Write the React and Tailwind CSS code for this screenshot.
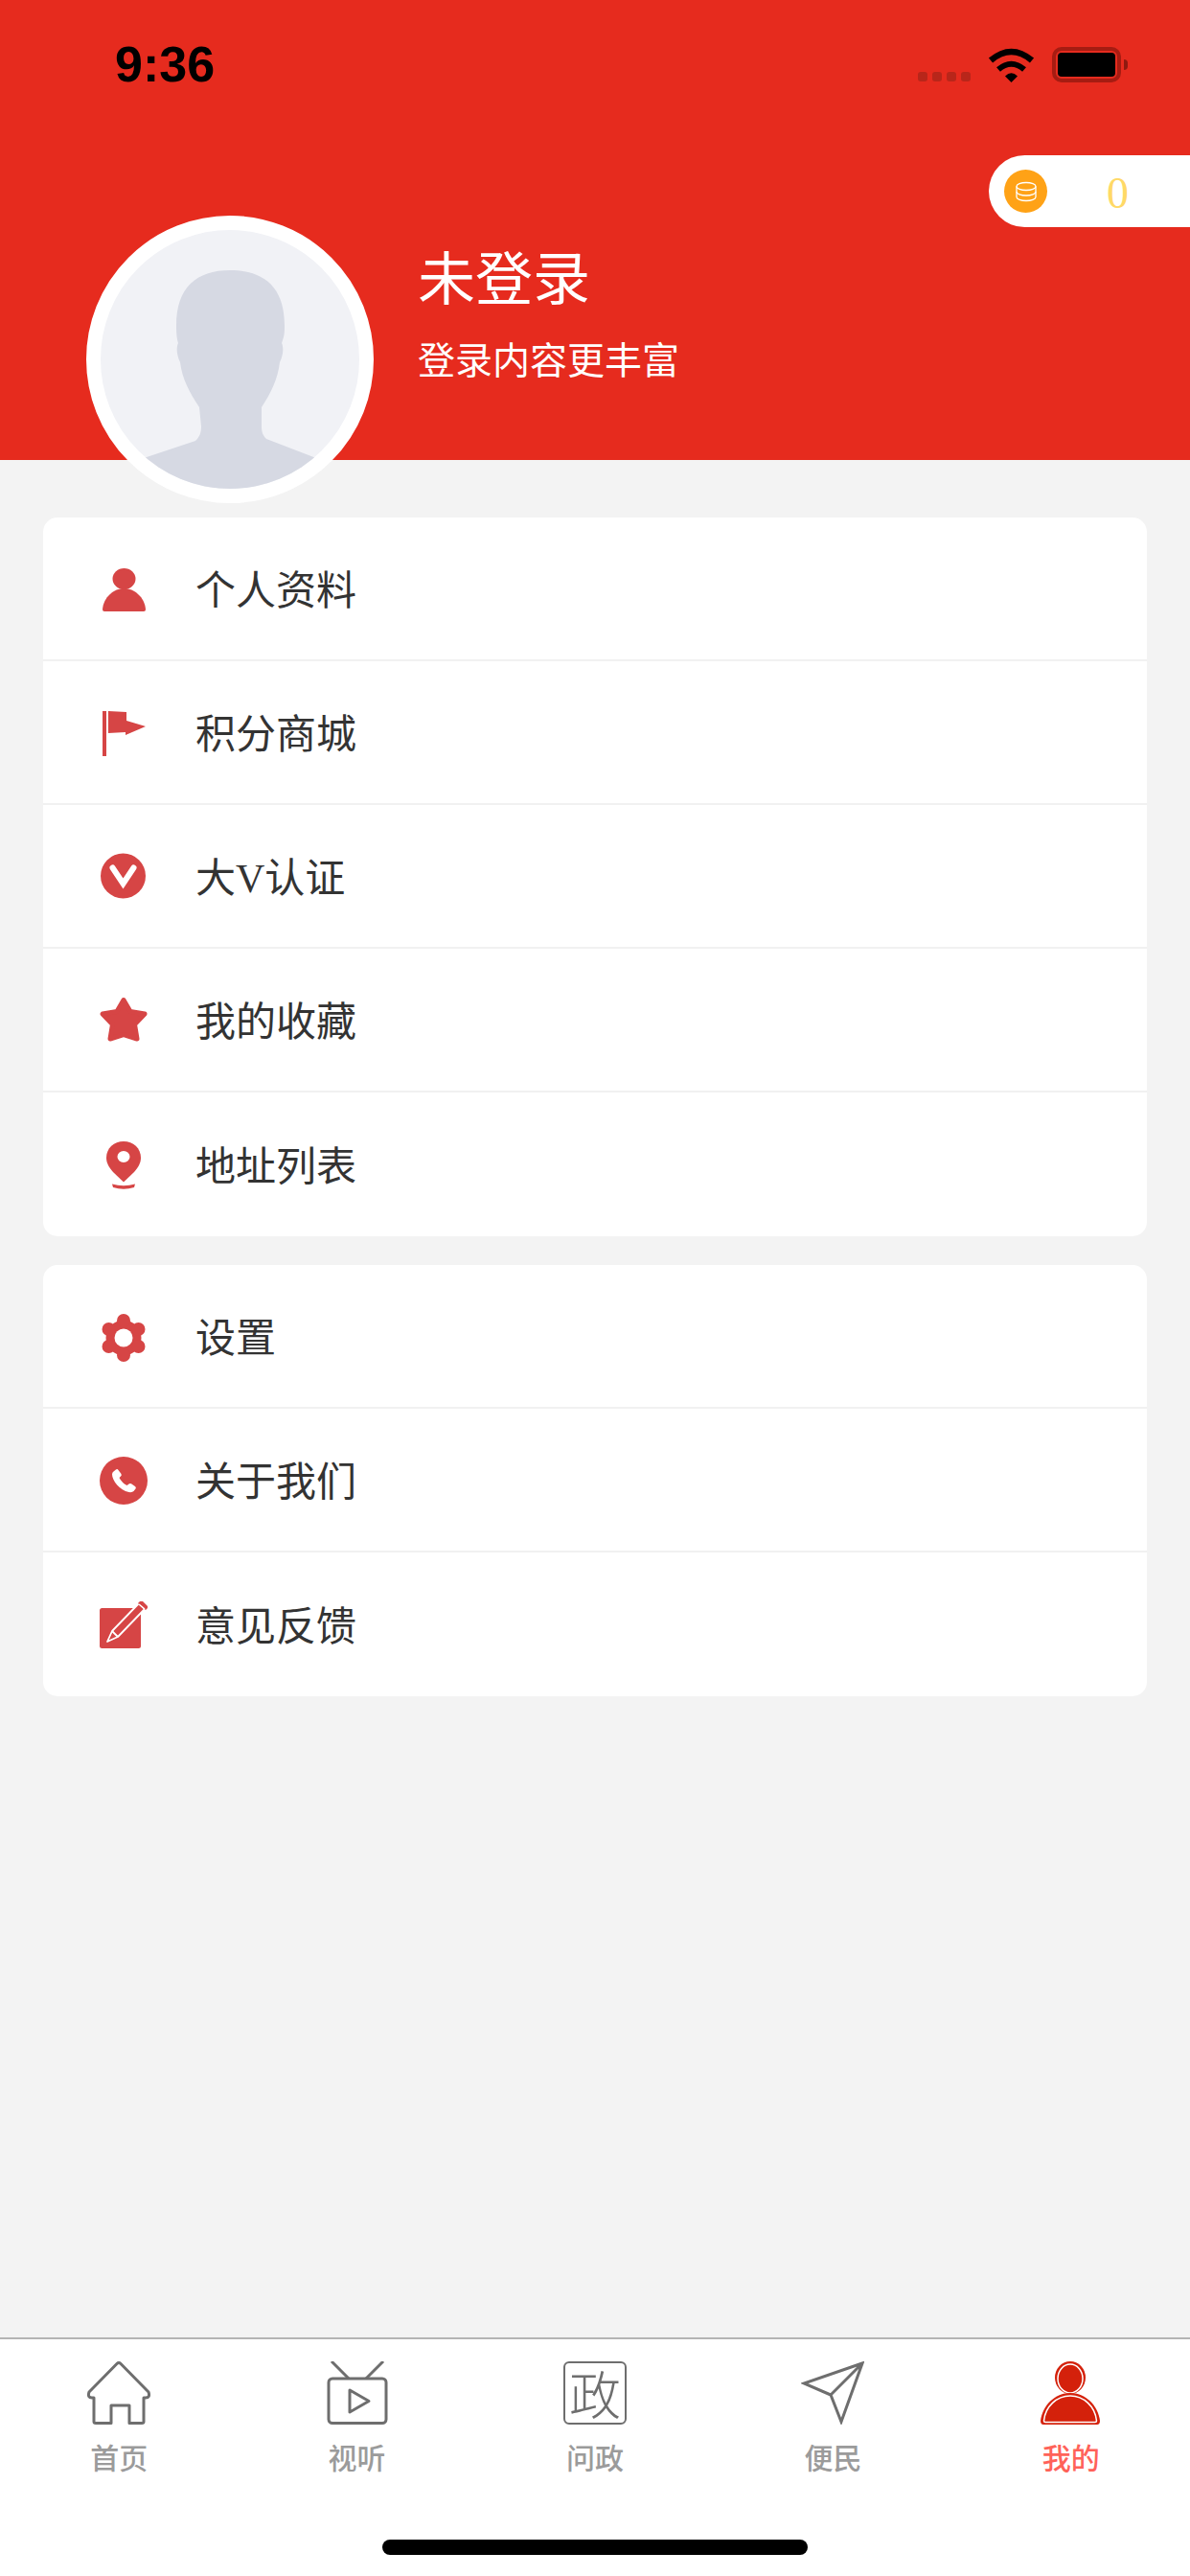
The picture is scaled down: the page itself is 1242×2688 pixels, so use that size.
import React from 'react';

const RED = '#d64545';

const PersonIcon = () => (
  <svg viewBox="0 0 60 60" className="w-[60px] h-[60px]" fill={RED}>
    <ellipse cx="30.5" cy="19" rx="12" ry="11" />
    <path d="M8 51C9 38 20 29 30.5 29C41 29 52 38 53 51Q53 53 51 53L10 53Q8 53 8 51Z" />
  </svg>
);

const FlagIcon = () => (
  <svg viewBox="0 0 60 60" className="w-[60px] h-[60px]" fill={RED}>
    <rect x="8" y="7" width="4" height="47" />
    <polygon points="14,7 33,8 33,17 53,23 32,32 32,29 14,30" />
  </svg>
);

const VipIcon = () => (
  <svg viewBox="0 0 60 60" className="w-[60px] h-[60px]">
    <circle cx="29.5" cy="29" r="23.5" fill={RED} />
    <path d="M18.500 20.500L29.500 37L40.500 20.500" fill="none" stroke="#fff" strokeWidth="6" strokeLinecap="round" strokeLinejoin="miter" />
  </svg>
);

const StarIcon = () => (
  <svg viewBox="0 0 60 60" className="w-[60px] h-[60px]">
    <polygon
      points="30,8.500 37,20.500 52,23 41.500,34 44,49 30,44.500 16,49 18.500,34 8,23 23,20.500"
      fill={RED}
      stroke={RED}
      strokeWidth="5"
      strokeLinejoin="round"
    />
  </svg>
);

const PinIcon = () => (
  <svg viewBox="0 0 60 60" className="w-[60px] h-[60px]">
    <path d="M30 5C40 5 48 12 48 22C48 28 45 32 41 37L30 47.500L19 37C15 32 12 28 12 22C12 12 20 5 30 5Z" fill={RED} />
    <ellipse cx="30" cy="21" rx="6.500" ry="6" fill="#fff" />
    <path d="M18 49.500Q30 53 42 49.500L41 53Q30 56.500 19 53Z" fill={RED} />
  </svg>
);

const GearIcon = () => (
  <svg viewBox="0 0 60 60" className="w-[60px] h-[60px]">
    <g fill={RED}>
      <circle cx="30" cy="31" r="18.500" />
      <circle cx="30" cy="13" r="7" />
      <circle cx="30" cy="49" r="7" />
      <circle cx="14.500" cy="22" r="7" />
      <circle cx="45.500" cy="22" r="7" />
      <circle cx="14.500" cy="40" r="7" />
      <circle cx="45.500" cy="40" r="7" />
    </g>
    <circle cx="30" cy="31" r="9.500" fill="#fff" />
  </svg>
);

const PhoneIcon = () => (
  <svg viewBox="0 0 60 60" className="w-[60px] h-[60px]">
    <circle cx="30" cy="30" r="25" fill={RED} />
    <path
      d="M19.500 20.500L22 18.500q1.500-1 2.500.5L27.500 23q.8 1.500-.5 2.500L25.500 27q2.500 5 8 8L35.500 33.500q1-1 2.500-.3L42 36q1.500 1 .5 2.500L40.500 41q-1.500 1.500-5 1C26 40 18 30 18 23.500q0-2 1.500-3Z"
      fill="#fff"
    />
  </svg>
);

const EditIcon = () => (
  <svg viewBox="0 0 60 60" className="w-[60px] h-[60px]">
    <rect x="5" y="12" width="43" height="42" rx="2.500" fill={RED} />
    <polygon points="13,47 18,36 46,7 52,13 24,42" fill={RED} stroke="#fff" strokeWidth="1.800" strokeLinejoin="round" />
    <path d="M18 36L24 42" stroke="#fff" strokeWidth="1.800" />
    <polygon points="47,5 50,5 55,10 55,12 53,14 45,7" fill={RED} />
    <path d="M46 8L52 13" stroke="#fff" strokeWidth="1.500" />
  </svg>
);

const HomeTab = () => (
  <svg viewBox="0 0 66 66" className="w-[66px] h-[66px]" fill="none" stroke="#6e6e6e" strokeWidth="3" strokeLinejoin="round">
    <path d="M7 38H5Q0 38 2 32L31 2.500Q33 .5 35 2.500L64 32Q66 38 61 38H59V63Q59 64.500 57 64.500H44V46H25V64.500H9Q7 64.500 7 63Z" />
  </svg>
);

const TvTab = () => (
  <svg viewBox="0 0 66 66" className="w-[66px] h-[66px]" fill="none" stroke="#6e6e6e" strokeWidth="3" strokeLinejoin="round">
    <rect x="3" y="18" width="60" height="46.500" rx="4" />
    <path d="M6 0L24 18M60 0L42 18" />
    <path d="M25 30L45 41.500L25 53Z" />
  </svg>
);

const SendTab = () => (
  <svg viewBox="0 0 66 66" className="w-[66px] h-[66px]" fill="none" stroke="#6e6e6e" strokeWidth="3" strokeLinejoin="miter">
    <path d="M64 2L3 23L31 35L42 63ZM64 2L31 35" />
  </svg>
);

const MineTab = () => (
  <svg viewBox="0 0 66 66" className="w-[66px] h-[66px]">
    <ellipse cx="32" cy="17" rx="16" ry="17" fill="#d4210b" />
    <ellipse cx="32" cy="18" rx="13" ry="15" fill="#d4210b" stroke="#fff" strokeWidth="1.500" />
    <path d="M1 62C3 46 16 33 32 33C48 33 61 46 63 62Q63 66 60 66H4Q1 66 1 62Z" fill="#d4210b" />
    <path d="M4.500 62C6 47 18 36 32 36C46 36 58 47 59.500 62Q59.500 63.500 58 63.500H6Q4.500 63.500 4.500 62Z" fill="#d4210b" stroke="#fff" strokeWidth="1.500" />
  </svg>
);

const group1 = [
  { Icon: PersonIcon, label: '个人资料' },
  { Icon: FlagIcon, label: '积分商城' },
  { Icon: VipIcon, label: '大V认证' },
  { Icon: StarIcon, label: '我的收藏' },
  { Icon: PinIcon, label: '地址列表' },
];

const group2 = [
  { Icon: GearIcon, label: '设置' },
  { Icon: PhoneIcon, label: '关于我们' },
  { Icon: EditIcon, label: '意见反馈' },
];

const MenuCard = ({ items }) => (
  <div className="bg-white rounded-[15px] overflow-hidden">
    {items.map(({ Icon, label }, i) => (
      <div key={label} className={`h-[150px] box-border flex items-center pl-[54px] pt-[2px] ${i < items.length - 1 ? 'border-b-2 border-[#f1f1f1]' : ''}`}>
        <Icon />
        <span className="ml-[45px] pt-[3px] text-[42px] leading-none text-[#333333] font-['Liberation_Serif','Noto_Sans_CJK_SC',serif]">{label}</span>
      </div>
    ))}
  </div>
);

const tabs = [
  { label: '首页', icon: <HomeTab /> },
  { label: '视听', icon: <TvTab /> },
  {
    label: '问政',
    icon: (
      <div className="w-[66px] h-[66px] box-border border-2 border-[#6e6e6e] rounded-[6px] flex items-center justify-center text-[54px] leading-none text-[#6e6e6e] font-light font-['Noto_Sans_CJK_SC',sans-serif]">政</div>
    ),
  },
  { label: '便民', icon: <SendTab /> },
  { label: '我的', icon: <MineTab />, active: true },
];

export default function App() {
  return (
    <div className="w-[1242px] min-h-[2688px] flex flex-col bg-[#f3f3f3] font-['Noto_Sans_CJK_SC',sans-serif]">
      <header className="h-[480px] shrink-0 bg-[#e62b1e] flex flex-col">
        {/* status bar */}
        <div className="h-[162px] shrink-0 box-border pt-[49px] pl-[120px] pr-[65px] flex items-start justify-between">
          <span className="text-[52px] leading-[37px] font-bold text-black font-['Liberation_Sans',sans-serif]">9:36</span>
          <div className="flex items-end gap-[18px]">
            <div className="flex gap-[5px] mb-[1px]">
              <div className="w-[10px] h-[10px] rounded-[3px] bg-[#b8261a]" />
              <div className="w-[10px] h-[10px] rounded-[3px] bg-[#b8261a]" />
              <div className="w-[10px] h-[10px] rounded-[3px] bg-[#b8261a]" />
              <div className="w-[10px] h-[10px] rounded-[3px] bg-[#b8261a]" />
            </div>
            <svg viewBox="0 0 49 36" className="w-[49px] h-[36px]">
              <path d="M3 13Q24.500-5 46 13" fill="none" stroke="#000" strokeWidth="6.500" />
              <path d="M11 22.500Q24.500 11 38 22.500" fill="none" stroke="#000" strokeWidth="6" />
              <path d="M24.500 36L18 29.500Q24.500 23 31 29.500Z" fill="#000" />
            </svg>
            <div className="flex items-center">
              <div className="w-[72px] h-[37px] box-border border-[4px] border-[#a61c12] rounded-[10px] p-[2px]">
                <div className="w-full h-full bg-black rounded-[4px]" />
              </div>
              <div className="ml-[3px] w-[4px] h-[11px] bg-[#8f1a10] rounded-r-full" />
            </div>
          </div>
        </div>

        {/* points pill */}
        <div className="self-end shrink-0 w-[210px] h-[75px] -mb-[12px] bg-white rounded-l-full flex items-center pl-[16px] relative">
          <div className="w-[45px] h-[45px] rounded-full bg-[#ffa216] flex items-center justify-center">
            <svg viewBox="0 0 24 24" className="w-[24px] h-[24px]" fill="none" stroke="#fff" strokeWidth="1.300">
              <ellipse cx="12" cy="6.500" rx="10" ry="4" />
              <path d="M2 6.500V12C2 14.200 6.500 16 12 16S22 14.200 22 12V6.500" />
              <path d="M2 12V17.500C2 19.700 6.500 21.500 12 21.500S22 19.700 22 17.500V12" />
            </svg>
          </div>
          <span className="ml-[62px] mt-[4px] text-[46px] leading-none text-[#ffd966] font-['Liberation_Serif',serif]">0</span>
        </div>

        {/* avatar + name */}
        <div className="shrink-0 pl-[90px] flex items-start gap-[46px]">
          <div className="relative z-10 w-[300px] h-[300px] shrink-0 box-border border-[15px] border-white rounded-full overflow-hidden bg-[#f1f2f6]">
            <svg viewBox="105 240 270 270" className="w-full h-full">
              <path
                d="M240 282C205 282 184 300 184 340C184 350 185 355 186 358C184 362 184 370 188 378C190 395 198 410 208 425L210 445C210 452 208 456 204 460L150 478L130 520L350 520L330 478L278 458C274 454 273 450 273 445L273 425C283 410 290 395 292 378C296 370 296 362 294 358C296 352 297 350 297 340C297 300 276 282 240 282Z"
                fill="#d6d9e3"
              />
            </svg>
          </div>
          <div className="pt-[27px] text-white">
            <div className="text-[60px] leading-[70px]">未登录</div>
            <div className="mt-[28px] text-[39px] leading-[46px]">登录内容更丰富</div>
          </div>
        </div>
      </header>

      <main className="flex-1 px-[45px] pt-[60px] flex flex-col gap-[30px]">
        <MenuCard items={group1} />
        <MenuCard items={group2} />
      </main>

      <nav className="h-[249px] shrink-0 box-border bg-white border-t-2 border-[#b4b4b4] flex flex-col">
        <div className="flex pt-[23px]">
          {tabs.map((t) => (
            <div key={t.label} className="flex-1 flex flex-col items-center">
              {t.icon}
              <span className={`mt-[15px] text-[30px] leading-[36px] font-medium ${t.active ? 'text-[#ff6259]' : 'text-[#9b9b9b]'}`}>{t.label}</span>
            </div>
          ))}
        </div>
        <div className="mt-[69px] self-center w-[444px] h-[16px] rounded-full bg-black" />
      </nav>
    </div>
  );
}
